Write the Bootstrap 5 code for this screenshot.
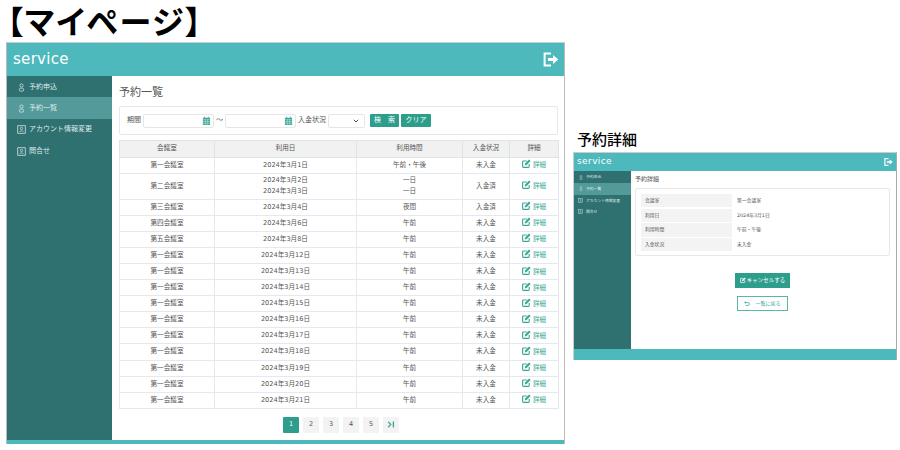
<!DOCTYPE html>
<html lang="ja"><head><meta charset="utf-8"><title>マイページ</title>
<link rel="stylesheet" href="https://cdn.jsdelivr.net/npm/bootstrap@5.3.0/dist/css/bootstrap.min.css">
<style>
html,body{height:450px;overflow:hidden;background:#fff}
body{font-family:"DejaVu Sans","Noto Sans CJK JP",sans-serif;color:#333;padding-left:6px;width:900px}
.ttl{font:700 32px/46px "Liberation Sans","Noto Sans CJK JP",sans-serif;font-feature-settings:"palt";letter-spacing:1.8px;color:#000;margin:0 0 0 1px;height:42px;white-space:nowrap}
.sub{font:500 15px/24px "Liberation Sans","Noto Sans CJK JP",sans-serif;color:#000;margin:0 0 0 4px;height:24px}
.leftcol{width:559px;flex:none}
.rightcol{width:324px;flex:none;margin-left:8px;padding-top:128px}
.win{border:1px solid #bbb;border-top-color:#ccc;border-bottom:0;height:402px;background:#fff}
.hdr{background:#4db9bc;height:33px;padding:0 5px 0 6px;color:#fff}
.logo{font-size:15px;letter-spacing:.3px}
.side{width:105px;background:#2f7070;flex:none;font-size:7px;color:#dfecec}
.sitem{height:21.3px;padding-left:6px;padding-top:1px}
.sitem.on{background:#559a9a}
.iw{width:16px;display:flex;justify-content:center;flex:none}
.main{padding:0 6px 0 7px;min-width:0}
.ph{font-size:11px;margin:0;height:30px;line-height:33px;font-weight:400;color:#555}
.fbox{border:1px solid #e8e8e8;border-radius:2px;height:29px;padding:0 7px;font-size:7px;margin-bottom:5px;gap:2px;color:#555}
.inp{width:71px;height:14px;border:1px solid #e6e6e6;border-radius:2px;padding-right:2px}
.sel{width:37px;height:14px;border:1px solid #e6e6e6;border-radius:2px;padding-right:5px}
.bg{background:#2d9e8c;color:#fff;font-size:7px;height:13px;border:0;border-radius:1px;padding:0;line-height:13px}
.b1{width:29px;margin-left:3px}.b2{width:30px}
.tb{table-layout:fixed;width:439px;font-size:6.6px;border-collapse:collapse;margin:0;color:#555}
.tb th,.tb td{border:1px solid #e3e9ee;padding:0;text-align:center;vertical-align:middle;height:16.1px;line-height:11px;font-weight:400}
.tb th{background:#f1f1f1;border-color:#dfe3e6;height:16.5px}
.tb td.tall{height:26px}
.c1{width:95px}.c2{width:142px}.c3{width:106px}.c4{width:47px}.c5{width:49px}
.tb td.det{color:#3aa795;white-space:nowrap}
.det svg{vertical-align:-1px;margin-right:2px}
.pg{gap:4px;margin-top:8px;padding-left:5px}
.pb{width:16px;height:16px;background:#f3f3f3;font-size:6.5px;color:#555;border-radius:1px}
.pb.on{background:#2d9e8c;color:#fff}
.ftr{background:#4db9bc;height:4px}
.win2{border:1px solid #ccc;border-bottom:0;height:208px;border-right-color:#aaa}
.win2 .hdr{height:18px;padding:0 3px 0 3px}
.win2 .logo{font-size:9px;letter-spacing:.4px}
.side2{width:57px;background:#2f7070;flex:none;font-size:3.8px;color:#dfecec;padding-top:.5px}
.s2i{height:11.6px;padding-left:1px}
.s2i.on{background:#559a9a}
.iw2{width:11px;display:flex;justify-content:center;flex:none}
.ph2{font-size:6px;height:16px;line-height:16px;margin:0 0 1px;color:#555;font-weight:400}
.dbox{border:1px solid #e8e8e8;border-radius:2px;height:68px;padding:5px 5px 0;font-size:4.8px;margin-right:6px;color:#555}
.drow{height:14.7px}
.dk{width:91px;background:#f3f3f3;height:13.5px;padding-left:4px}
.dv{padding-left:5px;height:13.5px}
.bwrap{margin-right:6px}
.cbtn{width:55px;height:15px;background:#2d9e8c;color:#fff;font-size:5.5px;margin-top:17px;gap:1px;border:0;padding:0;border-radius:0}
.rbtn{width:51px;height:15px;border:1px solid #5bb5a9;color:#3aa795;background:#fff;font-size:5px;margin-top:8px;gap:5px;padding:0;border-radius:0}
.ftr2{background:#4db9bc;height:11px}
.body2{height:179px}
</style></head><body class="d-flex">
<svg width="0" height="0" class="d-none">
<symbol id="pers" viewBox="0 0 10 12"><circle cx="5" cy="3.2" r="2.3" fill="none" stroke="currentColor" stroke-width="1"/><rect x="2" y="7" width="6" height="4.2" rx="1.6" fill="none" stroke="currentColor" stroke-width="1"/></symbol>
<symbol id="card" viewBox="0 0 12 12"><rect x="1" y="1" width="10" height="10" fill="none" stroke="currentColor" stroke-width="1"/><circle cx="6" cy="4.6" r="1.6" fill="none" stroke="currentColor" stroke-width=".9"/><path d="M3.5 9.2c.4-2 4.6-2 5 0" fill="none" stroke="currentColor" stroke-width=".9"/></symbol>
<symbol id="edit" viewBox="0 0 12 12"><path d="M9.6 6.5V10a1.2 1.2 0 0 1-1.2 1.2H2A1.2 1.2 0 0 1 .8 10V3.8A1.2 1.2 0 0 1 2 2.6h4.4" fill="none" stroke="currentColor" stroke-width="1.5"/><path d="M3.6 8.6l.6-2.6L9.4.8l2 2L6.2 8z" fill="currentColor"/></symbol>
<symbol id="cal" viewBox="0 0 10 10"><path d="M1 2h8v8H1z" fill="#3aa795"/><path d="M1 4h8M3.7 4v6M6.3 4v6M1 6h8M1 8h8" stroke="#d8f0ec" stroke-width=".5"/><path d="M3 .8v2M7 .8v2" stroke="#3aa795" stroke-width="1"/></symbol>
<symbol id="out" viewBox="0 0 16 14"><path d="M8 1H1.6v12H8" fill="none" stroke="#fff" stroke-width="2"/><path d="M5 5.6h5V2.4L15.4 7 10 11.6V8.4H5z" fill="#fff"/></symbol>
</svg>
<div class="leftcol">
<h1 class="ttl">【マイページ】</h1>
<div class="win d-flex flex-column">
 <div class="hdr d-flex align-items-center justify-content-between"><span class="logo">service</span><svg width="16" height="15"><use href="#out"/></svg></div>
 <div class="d-flex flex-grow-1">
  <div class="side">
   <div class="sitem d-flex align-items-center"><span class="iw"><svg width="7" height="9"><use href="#pers"/></svg></span><span>予約申込</span></div>
   <div class="sitem on d-flex align-items-center"><span class="iw"><svg width="7" height="9"><use href="#pers"/></svg></span><span>予約一覧</span></div>
   <div class="sitem d-flex align-items-center"><span class="iw"><svg width="9" height="9"><use href="#card"/></svg></span><span>アカウント情報変更</span></div>
   <div class="sitem d-flex align-items-center"><span class="iw"><svg width="9" height="9"><use href="#card"/></svg></span><span>問合せ</span></div>
  </div>
  <div class="main flex-grow-1">
   <h2 class="ph">予約一覧</h2>
   <div class="fbox d-flex align-items-center">
    <span>期間</span>
    <div class="inp d-flex align-items-center justify-content-end"><svg width="9" height="9"><use href="#cal"/></svg></div><span>～</span>
    <div class="inp d-flex align-items-center justify-content-end"><svg width="9" height="9"><use href="#cal"/></svg></div>
    <span>入金状況</span>
    <div class="sel d-flex align-items-center justify-content-end"><svg width="6" height="4" viewBox="0 0 6 4"><path d="M.8.8 3 3 5.2.8" fill="none" stroke="#456" stroke-width="1"/></svg></div>
    <button class="btn bg b1">検　索</button><button class="btn bg b2">クリア</button>
   </div>
   <table class="tb">
    <colgroup><col class="c1"><col class="c2"><col class="c3"><col class="c4"><col class="c5"></colgroup>
    <thead><tr><th>会議室</th><th>利用日</th><th>利用時間</th><th>入金状況</th><th>詳細</th></tr></thead>
    <tbody>
    <tr><td>第一会議室</td><td>2024年3月1日</td><td>午前・午後</td><td>未入金</td><td class="det"><svg width="9" height="9"><use href="#edit"/></svg>詳細</td></tr>
    <tr><td class="tall">第二会議室</td><td>2024年3月2日<br>2024年3月3日</td><td>一日<br>一日</td><td>入金済</td><td class="det"><svg width="9" height="9"><use href="#edit"/></svg>詳細</td></tr>
    <tr><td>第三会議室</td><td>2024年3月4日</td><td>夜間</td><td>入金済</td><td class="det"><svg width="9" height="9"><use href="#edit"/></svg>詳細</td></tr>
    <tr><td>第四会議室</td><td>2024年3月6日</td><td>午前</td><td>未入金</td><td class="det"><svg width="9" height="9"><use href="#edit"/></svg>詳細</td></tr>
    <tr><td>第五会議室</td><td>2024年3月8日</td><td>午前</td><td>未入金</td><td class="det"><svg width="9" height="9"><use href="#edit"/></svg>詳細</td></tr>
    <tr><td>第一会議室</td><td>2024年3月12日</td><td>午前</td><td>未入金</td><td class="det"><svg width="9" height="9"><use href="#edit"/></svg>詳細</td></tr>
    <tr><td>第一会議室</td><td>2024年3月13日</td><td>午前</td><td>未入金</td><td class="det"><svg width="9" height="9"><use href="#edit"/></svg>詳細</td></tr>
    <tr><td>第一会議室</td><td>2024年3月14日</td><td>午前</td><td>未入金</td><td class="det"><svg width="9" height="9"><use href="#edit"/></svg>詳細</td></tr>
    <tr><td>第一会議室</td><td>2024年3月15日</td><td>午前</td><td>未入金</td><td class="det"><svg width="9" height="9"><use href="#edit"/></svg>詳細</td></tr>
    <tr><td>第一会議室</td><td>2024年3月16日</td><td>午前</td><td>未入金</td><td class="det"><svg width="9" height="9"><use href="#edit"/></svg>詳細</td></tr>
    <tr><td>第一会議室</td><td>2024年3月17日</td><td>午前</td><td>未入金</td><td class="det"><svg width="9" height="9"><use href="#edit"/></svg>詳細</td></tr>
    <tr><td>第一会議室</td><td>2024年3月18日</td><td>午前</td><td>未入金</td><td class="det"><svg width="9" height="9"><use href="#edit"/></svg>詳細</td></tr>
    <tr><td>第一会議室</td><td>2024年3月19日</td><td>午前</td><td>未入金</td><td class="det"><svg width="9" height="9"><use href="#edit"/></svg>詳細</td></tr>
    <tr><td>第一会議室</td><td>2024年3月20日</td><td>午前</td><td>未入金</td><td class="det"><svg width="9" height="9"><use href="#edit"/></svg>詳細</td></tr>
    <tr><td>第一会議室</td><td>2024年3月21日</td><td>午前</td><td>未入金</td><td class="det"><svg width="9" height="9"><use href="#edit"/></svg>詳細</td></tr>
    </tbody>
   </table>
   <div class="pg d-flex justify-content-center">
    <span class="pb on d-flex align-items-center justify-content-center">1</span><span class="pb d-flex align-items-center justify-content-center">2</span><span class="pb d-flex align-items-center justify-content-center">3</span><span class="pb d-flex align-items-center justify-content-center">4</span><span class="pb d-flex align-items-center justify-content-center">5</span>
    <span class="pb d-flex align-items-center justify-content-center"><svg width="8" height="7" viewBox="0 0 7 6"><path d="M1 .6 3.4 3 1 5.4" fill="none" stroke="#3aa795" stroke-width="1"/><path d="M5.6.4v5.2" stroke="#3aa795" stroke-width="1.2"/></svg></span>
   </div>
  </div>
 </div>
 <div class="ftr"></div>
</div>
</div>
<div class="rightcol">
<h2 class="sub">予約詳細</h2>
<div class="win2 d-flex flex-column">
 <div class="hdr d-flex align-items-center justify-content-between"><span class="logo">service</span><svg width="9" height="8"><use href="#out"/></svg></div>
 <div class="d-flex body2">
  <div class="side2">
   <div class="s2i d-flex align-items-center"><span class="iw2"><svg width="4" height="5"><use href="#pers"/></svg></span><span>予約申込</span></div>
   <div class="s2i on d-flex align-items-center"><span class="iw2"><svg width="4" height="5"><use href="#pers"/></svg></span><span>予約一覧</span></div>
   <div class="s2i d-flex align-items-center"><span class="iw2"><svg width="5" height="5"><use href="#card"/></svg></span><span>アカウント情報変更</span></div>
   <div class="s2i d-flex align-items-center"><span class="iw2"><svg width="5" height="5"><use href="#card"/></svg></span><span>問合せ</span></div>
  </div>
  <div class="flex-grow-1 ps-1 d-flex flex-column">
   <h2 class="ph2">予約詳細</h2>
   <div class="dbox">
    <div class="drow d-flex"><div class="dk d-flex align-items-center">会議室</div><div class="dv d-flex align-items-center">第一会議室</div></div>
    <div class="drow d-flex"><div class="dk d-flex align-items-center">利用日</div><div class="dv d-flex align-items-center">2024年3月1日</div></div>
    <div class="drow d-flex"><div class="dk d-flex align-items-center">利用時間</div><div class="dv d-flex align-items-center">午前・午後</div></div>
    <div class="drow d-flex"><div class="dk d-flex align-items-center">入金状況</div><div class="dv d-flex align-items-center">未入金</div></div>
   </div>
   <div class="bwrap d-flex flex-column align-items-center">
    <button class="btn cbtn d-flex align-items-center justify-content-center"><svg width="6" height="6"><use href="#edit"/></svg>キャンセルする</button>
    <button class="btn rbtn d-flex align-items-center justify-content-center"><svg width="6" height="5" viewBox="0 0 6 5"><path d="M2 .5.6 1.5 2 2.5M.6 1.5h3.4a1.5 1.5 0 0 1 0 3H1.5" fill="none" stroke="#3aa795" stroke-width=".7"/></svg>一覧に戻る</button>
   </div>
  </div>
 </div>
 <div class="ftr2"></div>
</div>
</div>
</body></html>
